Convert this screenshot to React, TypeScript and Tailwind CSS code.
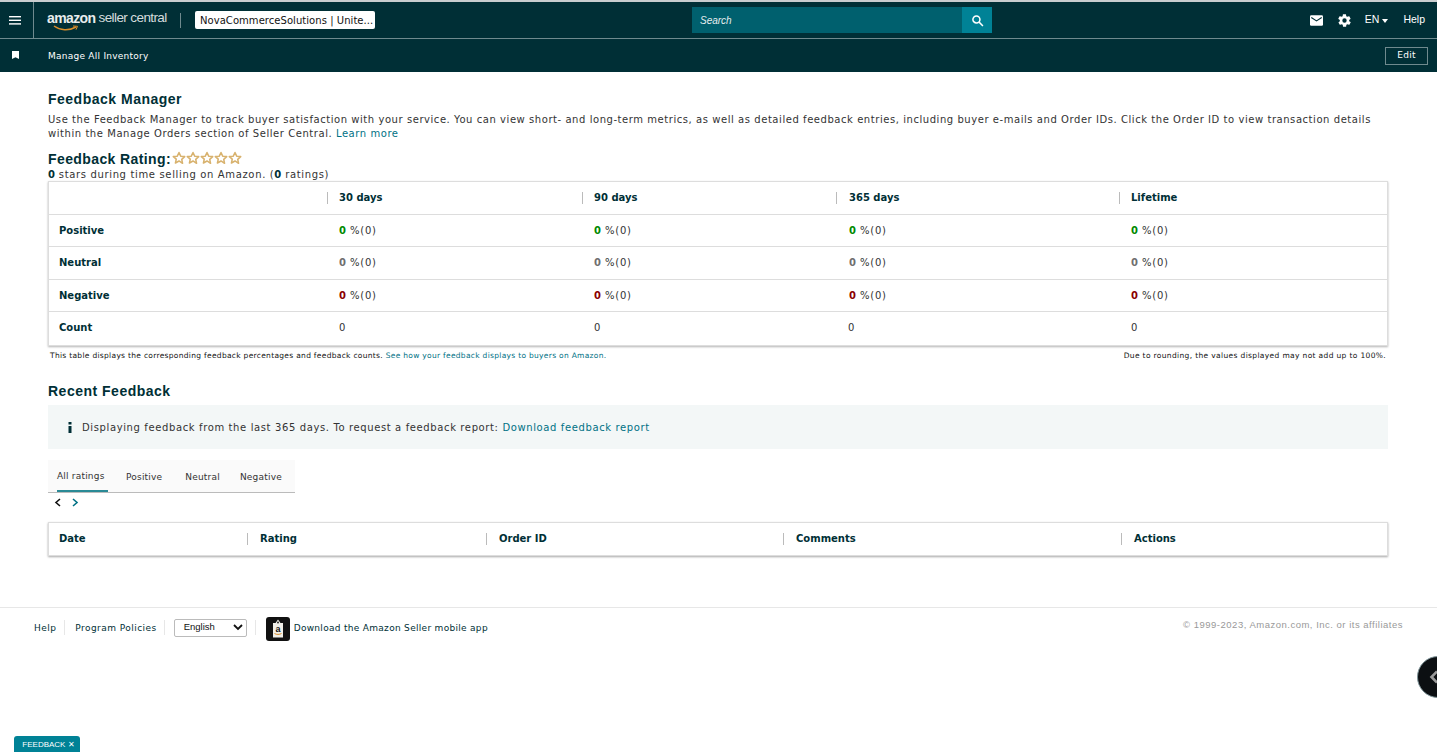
import React from "react";

const body = "font-['DejaVu_Sans',sans-serif]";
const link = "text-[#007185]";

function StarIcon() {
  return (
    <svg width="14" height="14" viewBox="0 0 24 24" fill="#fff" stroke="#d8b26e" strokeWidth="2.6" strokeLinejoin="round">
      <path d="M12 2.5l2.9 6.3 6.9.8-5.1 4.7 1.4 6.8L12 17.1l-6.1 3.5 1.4-6.8L2.2 9.6l6.9-.8z" />
    </svg>
  );
}

function Cell({ color }: { color: string }) {
  return (
    <span className="text-[10px] tracking-[0.8px] text-[#333]">
      <b className={`${color} tracking-normal`}>0</b> %(0)
    </span>
  );
}

const metricRows = [
  { label: "Positive", color: "text-[#008a00]", h: "h-[32px]", shift: "" },
  { label: "Neutral", color: "text-[#6f6f6f]", h: "h-[33px]", shift: "pb-[1px]" },
  { label: "Negative", color: "text-[#8b0000]", h: "h-[32px]", shift: "" },
];

const grid1 = "grid grid-cols-[278px_255px_254px_283px_1fr]";
const grid2 = "grid grid-cols-[198px_239px_297px_338px_1fr]";

function HeadCell({ children, first, gap = "mr-[11px]" }: { children?: React.ReactNode; first?: boolean; gap?: string }) {
  return (
    <div className={`flex items-center h-full ${first ? "pl-[10px]" : ""}`}>
      {!first && <span className={`w-px h-[12px] bg-[#bbb] ${gap}`} />}
      <b className="pb-[2px] text-[10px] text-[#002f36]">{children}</b>
    </div>
  );
}

export default function App() {
  return (
    <div className={`relative h-[752px] w-full overflow-hidden bg-white ${body} text-[10px] text-[#0f1111]`}>
      {/* Top bar */}
      <div className="h-[2px] bg-[#c9cdcf]" />
      <header className="flex h-[36px] items-center bg-[#002f36] font-['Liberation_Sans',sans-serif] text-white">
        <div className="flex h-full w-[34px] items-center justify-center border-r border-[#6f8a8e] pr-[3px]">
          <svg width="12" height="9" viewBox="0 0 12 9" fill="#fff">
            <rect y="0" width="12" height="1.4" />
            <rect y="3.6" width="12" height="1.4" />
            <rect y="7.2" width="12" height="1.4" />
          </svg>
        </div>
        <div className="relative ml-[13px] flex h-full w-[120px] items-center whitespace-nowrap pb-[3px] text-[#e8eced]">
          <span className="text-[14px] font-bold tracking-[-0.6px]">amazon</span>
          <span className="ml-[3px] text-[13.5px] tracking-[-0.6px] text-[#d5dcdd]">seller central</span>
          <svg className="absolute left-[6px] top-[23px]" width="26" height="7" viewBox="0 0 26 7" fill="none">
            <path d="M1 1c6 4.5 15 5 22 1" stroke="#d98e2b" strokeWidth="1.5" />
            <path d="M20 1l4.5.3-1.5 3.4" stroke="#d98e2b" strokeWidth="1" />
          </svg>
        </div>
        <span className="ml-[13px] h-[15px] w-px bg-[#6f8a8e]" />
        <div className={`ml-[14px] flex h-[18px] w-[180px] items-center rounded-[2px] bg-white pl-[5px] text-[10px] text-[#111] ${body} tracking-[0.05px] whitespace-nowrap`}>
          NovaCommerceSolutions | Unite...
        </div>
        <div className="ml-[317px] flex h-[26px] w-[300px]">
          <div className="flex flex-1 items-center bg-[#00606e] pl-[8px] text-[10px] italic text-[#e6eeef]">Search</div>
          <div className="flex w-[30px] items-center justify-center bg-[#008296]">
            <svg width="13" height="13" viewBox="0 0 24 24" fill="none" stroke="#fff" strokeWidth="2.8">
              <circle cx="10" cy="10" r="6.5" />
              <path d="M15 15l7 7" />
            </svg>
          </div>
        </div>
        <div className="ml-auto flex items-center pr-[12px] text-[10.5px]">
          <svg width="13" height="11" viewBox="0 0 15 12">
            <rect width="15" height="12" rx="1.5" fill="#fff" />
            <path d="M1.5 2.5l6 4 6-4" fill="none" stroke="#002f36" strokeWidth="1.3" />
          </svg>
          <svg className="ml-[14px]" width="15" height="15" viewBox="0 0 24 24" fill="#fff">
            <path fillRule="evenodd" d="M19.4 13c.1-.3.1-.7.1-1s0-.7-.1-1l2.1-1.6c.2-.2.2-.4.1-.6l-2-3.5c-.1-.2-.4-.3-.6-.2l-2.5 1c-.5-.4-1.1-.7-1.7-1l-.4-2.6c0-.3-.2-.5-.5-.5h-4c-.3 0-.5.2-.5.4l-.4 2.7c-.6.2-1.2.6-1.7 1l-2.5-1c-.2-.1-.5 0-.6.2l-2 3.5c-.1.2-.1.4.1.6L4.6 11c-.1.3-.1.7-.1 1s0 .7.1 1l-2.1 1.6c-.2.2-.2.4-.1.6l2 3.5c.1.2.4.3.6.2l2.5-1c.5.4 1.1.7 1.7 1l.4 2.6c0 .2.2.4.5.4h4c.3 0 .5-.2.5-.4l.4-2.7c.6-.2 1.2-.6 1.7-1l2.5 1c.2.1.5 0 .6-.2l2-3.5c.1-.2.1-.4-.1-.6L19.4 13zM12 15.5a3.5 3.5 0 110-7 3.5 3.5 0 010 7z" />
          </svg>
          <span className="ml-[13px]">EN</span>
          <span className="ml-[3px] mt-[1px] h-0 w-0 border-x-[3.5px] border-t-[4px] border-x-transparent border-t-white" />
          <span className="ml-[15px]">Help</span>
        </div>
      </header>
      <div className="h-px bg-[#6f8a8e]" />
      <div className="flex h-[33px] items-center bg-[#002f36] pr-[9px] text-white">
        <svg className="ml-[12px] mt-[-1px]" width="7" height="8" viewBox="0 0 8 9" fill="#fff">
          <path d="M0 0h8v9L4 7 0 9z" />
        </svg>
        <span className="ml-[29px] pt-[3px] text-[9px] tracking-[0.25px]">Manage All Inventory</span>
        <div className="ml-auto flex h-[18px] w-[43px] items-center justify-center border border-[#6f8a8e] text-[9px] tracking-[0.3px]">Edit</div>
      </div>

      {/* Main */}
      <main className="mx-[48px] w-[1340px]">
        <h1 className="mt-[19px] font-['Liberation_Sans',sans-serif] text-[14px] font-bold leading-[17px] tracking-[0.5px] text-[#002f36]">Feedback Manager</h1>
        <p className="mt-[5px] text-[10px] leading-[14px] tracking-[0.555px] text-[#333]">
          Use the Feedback Manager to track buyer satisfaction with your service. You can view short- and long-term metrics, as well as detailed feedback entries, including buyer e-mails and Order IDs. Click the Order ID to view transaction details within the Manage Orders section of Seller Central. <span className={link}>Learn more</span>
        </p>
        <div className="mt-[10px] flex h-[16px] items-center">
          <h2 className="font-['Liberation_Sans',sans-serif] text-[14px] font-bold tracking-[0.4px] text-[#002f36]">Feedback Rating:</h2>
          <div className="ml-[1px] flex mt-[-3px]">
            {[0, 1, 2, 3, 4].map((i) => <StarIcon key={i} />)}
          </div>
        </div>
        <div className="h-[14px] pt-[1px] text-[10px] leading-[14px] tracking-[0.65px] text-[#333]"><b className="text-[#002f36] tracking-normal">0</b> stars during time selling on Amazon. (<b className="text-[#002f36] tracking-normal">0</b> ratings)</div>

        <div className="border border-[#ddd] shadow-[0_1px_2px_rgba(0,0,0,0.3)]">
          <div className={`${grid1} h-[33px] border-b border-[#ddd]`}>
            <HeadCell first />
            <HeadCell>30 days</HeadCell>
            <HeadCell>90 days</HeadCell>
            <HeadCell gap="mr-[12px]">365 days</HeadCell>
            <HeadCell>Lifetime</HeadCell>
          </div>
          {metricRows.map((r) => (
            <div key={r.label} className={`${grid1} ${r.h} ${r.shift} items-center border-b border-[#ddd]`}>
              <b className="pl-[10px] text-[#002f36]">{r.label}</b>
              {[0, 1, 2, 3].map((i) => (
                <div key={i} className={i === 2 ? "pl-[13px]" : "pl-[12px]"}><Cell color={r.color} /></div>
              ))}
            </div>
          ))}
          <div className={`${grid1} h-[33px] pb-[2px] items-center`}>
            <b className="pl-[10px] text-[#002f36]">Count</b>
            {[0, 1, 2, 3].map((i) => (
              <div key={i} className="pl-[12px] text-[#333]">0</div>
            ))}
          </div>
        </div>
        <div className="mt-[4px] flex justify-between px-[2px] text-[7.5px] leading-[11px] tracking-[0.3px] text-[#111]">
          <span>This table displays the corresponding feedback percentages and feedback counts. <span className={link}>See how your feedback displays to buyers on Amazon.</span></span>
          <span className="tracking-[0.35px]">Due to rounding, the values displayed may not add up to 100%.</span>
        </div>

        <h2 className="mt-[22px] font-['Liberation_Sans',sans-serif] text-[14px] font-bold leading-[17px] tracking-[0.5px] text-[#002f36]">Recent Feedback</h2>
        <div className="mt-[5px] flex h-[44px] items-center bg-[#f3f7f7] pl-[20px] text-[10px] tracking-[0.62px] text-[#333]">
          <svg width="4" height="11" viewBox="0 0 4 11" fill="#002f36">
            <rect x="0.5" y="0" width="3" height="2.5" />
            <rect x="0.5" y="4" width="3" height="7" />
          </svg>
          <span className="ml-[10px] pt-[1px]">Displaying feedback from the last 365 days. To request a feedback report: <span className={link}>Download feedback report</span></span>
        </div>

        <div className="mt-[11px] flex h-[33px] w-[247px] border-b border-[#bbb] bg-[#fafafa] pl-[9px] text-[9px] tracking-[0.2px] text-[#333]">
          <div className="flex h-[32px] w-[51px] items-center border-b-2 border-[#2a8a96] pt-[3px]">All ratings</div>
          <div className="ml-[18px] flex items-center pt-[3px]">Positive</div>
          <div className="ml-[23px] flex items-center pt-[3px]">Neutral</div>
          <div className="ml-[20px] flex items-center pt-[3px]">Negative</div>
        </div>
        <div className="flex h-[18px] items-center pl-[6px]">
          <svg width="8" height="9" viewBox="0 0 8 9" fill="none" stroke="#111" strokeWidth="1.6"><path d="M6 1L2 4.5 6 8" /></svg>
          <svg className="ml-[9px]" width="8" height="9" viewBox="0 0 8 9" fill="none" stroke="#007185" strokeWidth="1.6"><path d="M2 1l4 3.5L2 8" /></svg>
        </div>

        <div className="mt-[11px] border border-[#ddd] shadow-[0_1px_2px_rgba(0,0,0,0.35)]">
          <div className={`${grid2} h-[32px]`}>
            <HeadCell first>Date</HeadCell>
            <HeadCell gap="mr-[12px]">Rating</HeadCell>
            <HeadCell gap="mr-[12px]">Order ID</HeadCell>
            <HeadCell gap="mr-[12px]">Comments</HeadCell>
            <HeadCell gap="mr-[12px]">Actions</HeadCell>
          </div>
        </div>
      </main>

      {/* Footer */}
      <footer className="mt-[51px] flex h-[40px] items-center border-t border-[#e7e7e7] pl-[34px] pr-[34px] text-[9px] text-[#002f36]">
        <span className="pt-[3px] tracking-[0.45px]">Help</span>
        <span className="ml-[8px] h-[15px] w-px bg-[#e7e7e7]" />
        <span className="ml-[10px] pt-[3px] tracking-[0.45px]">Program Policies</span>
        <span className="ml-[7px] h-[15px] w-px bg-[#e7e7e7]" />
        <div className="ml-[9px] flex h-[18px] w-[73px] items-center justify-between rounded-[2px] border border-[#bbb] pl-[9px] pr-[3px] font-['Liberation_Sans',sans-serif] text-[9.5px] text-[#111]">
          English
          <svg width="10" height="7" viewBox="0 0 10 7" fill="none" stroke="#111" strokeWidth="1.8"><path d="M1 1l4 4 4-4" /></svg>
        </div>
        <span className="ml-[8px] h-[15px] w-px bg-[#e7e7e7]" />
        <div className="ml-[10px] mt-[2px] flex h-[24px] w-[24px] items-center justify-center rounded-[3px] bg-[#111]">
          <svg width="14" height="19" viewBox="0 0 14 19">
            <path d="M7 0.5l2.5 3.5H12v14.5H2V4h2.5z" fill="#f1efe8" />
            <circle cx="7" cy="3.5" r="0.9" fill="#111" />
            <path d="M3.5 14.5c2 1.2 5 1.2 7 0" stroke="#d98e2b" strokeWidth="1" fill="none" />
            <text x="7" y="13" fontSize="9" fontWeight="700" textAnchor="middle" fill="#111" fontFamily="Liberation Sans">a</text>
          </svg>
        </div>
        <span className="ml-[4px] pt-[3px] tracking-[0.3px]">Download the Amazon Seller mobile app</span>
        <span className="ml-auto self-start pt-[10px] font-['Liberation_Sans',sans-serif] text-[9.5px] tracking-[0.5px] text-[#999]">© 1999-2023, Amazon.com, Inc. or its affiliates</span>
      </footer>

      {/* Floating items */}
      <div className="absolute left-[1417px] top-[656px] flex h-[42px] w-[42px] items-center rounded-full border border-[#7d9297] bg-[#0c0f12] pl-[11px]">
        <svg width="10" height="14" viewBox="0 0 10 14" fill="none" stroke="#9a9a9a" strokeWidth="2.6"><path d="M8 1.5L2.5 7 8 12.5" /></svg>
      </div>
      <div className="absolute left-[14px] top-[736px] flex h-[16px] w-[66px] items-center justify-center rounded-t-[3px] bg-[#008296] pl-[3px] pt-[2px] font-['Liberation_Sans',sans-serif] text-[8px] text-white">
        FEEDBACK ✕
      </div>
    </div>
  );
}
